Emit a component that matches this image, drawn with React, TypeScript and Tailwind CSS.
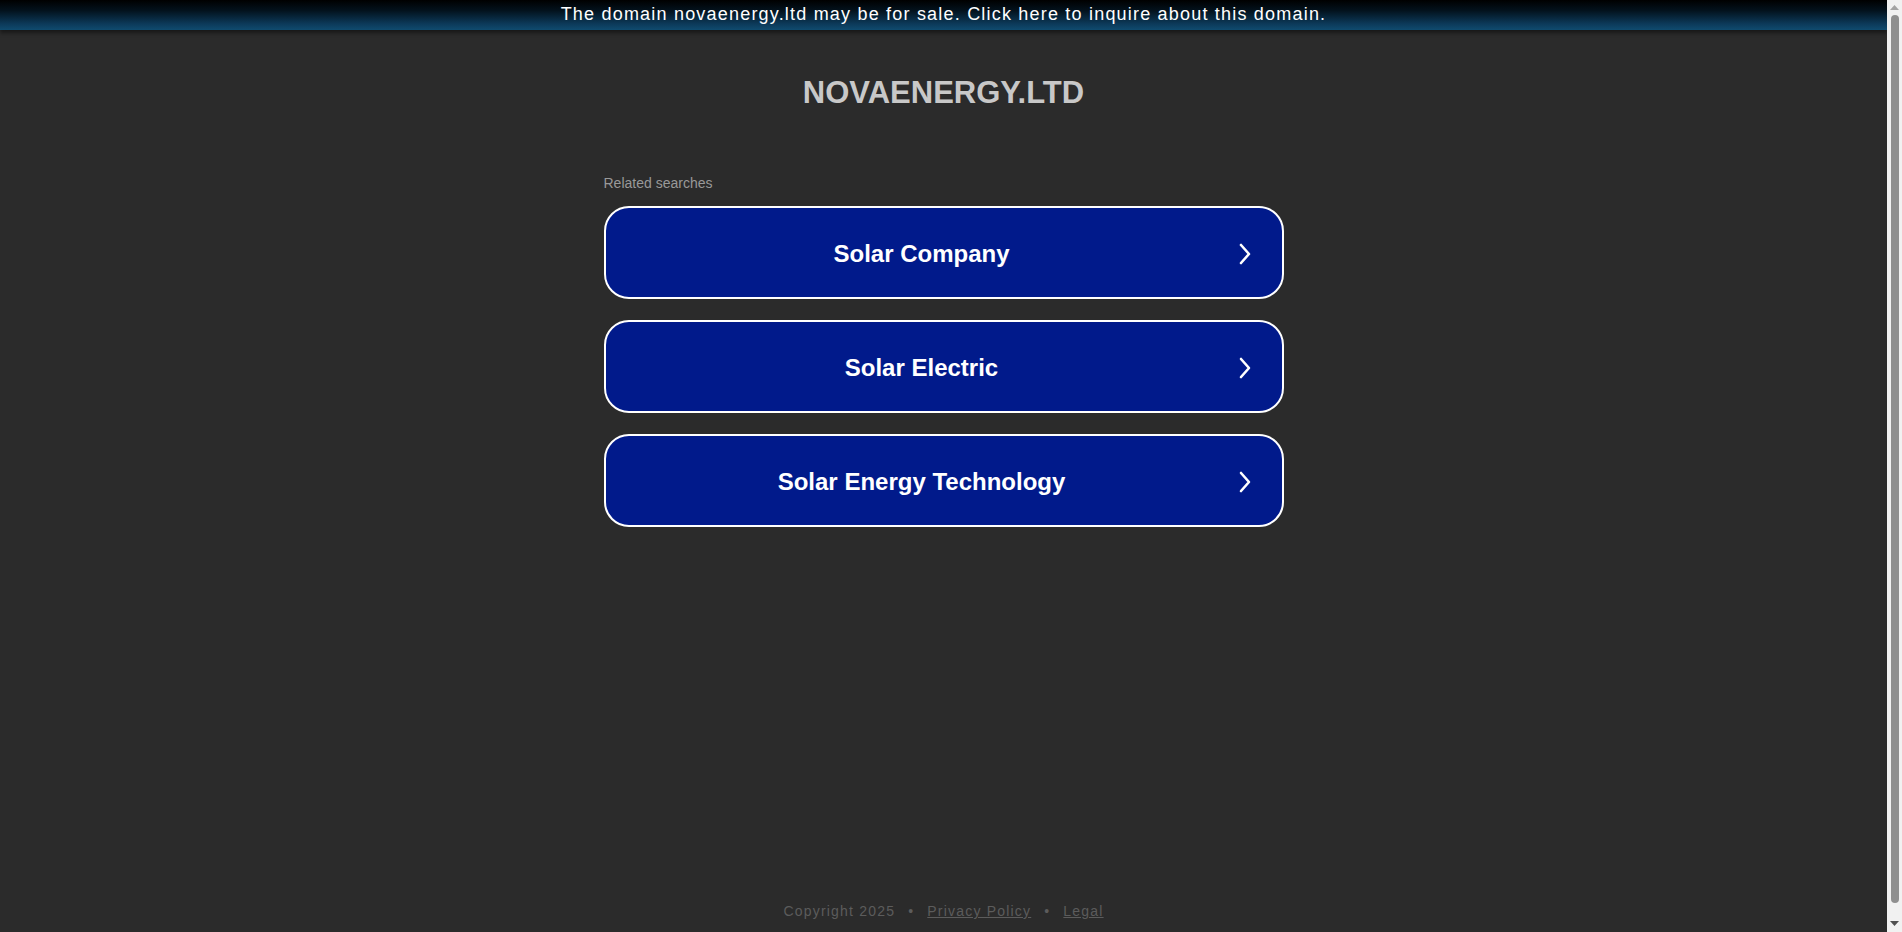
const searches = ["Solar Company", "Solar Electric", "Solar Energy Technology"];

function Chevron() {
  return (
    <svg width="14" height="24" viewBox="0 0 14 24" fill="none" className="shrink-0">
      <path d="M3 3 L11 12 L3 21" stroke="white" strokeWidth="2.6" strokeLinecap="round" strokeLinejoin="round" />
    </svg>
  );
}

export default function App() {
  return (
    <div className="flex h-[932px] overflow-hidden bg-[#2b2b2b] font-['Liberation_Sans',Arial,sans-serif]">
      <div className="flex min-w-0 flex-1 flex-col">
        {/* Sale banner */}
        <a
          href="#"
          className="block h-[30px] bg-[linear-gradient(to_bottom,#000000_0%,#03121d_35%,#0c3a5a_80%,#0f4b6f_100%)] text-center text-[18px] leading-[29px] tracking-[1.2px] text-white shadow-[0_3px_4px_rgba(0,0,0,0.45)]"
        >
          The domain novaenergy.ltd may be for sale. Click here to inquire about this domain.
        </a>

        {/* Domain title */}
        <h1 className="pt-[45px] text-center text-[31px] font-bold leading-[36px] text-[#c8c8c8]">
          NOVAENERGY.LTD
        </h1>

        {/* Related searches */}
        <div className="mx-auto mt-[64px] w-[680px]">
          <p className="text-[14px] leading-4 text-[#999999]">Related searches</p>
          <div className="mt-[15px] flex flex-col gap-[21px]">
            {searches.map((s) => (
              <a
                key={s}
                href="#"
                className="flex h-[93px] items-center rounded-[25px] border-2 border-white bg-[#011a8b] pt-[3px] pr-[30px] text-white"
              >
                <span className="flex-1 text-center text-[24px] font-bold">{s}</span>
                <Chevron />
              </a>
            ))}
          </div>
        </div>

        {/* Footer */}
        <footer className="mt-auto pb-[13px] text-center text-[14px] leading-4 tracking-[1.2px] text-[#5c5c5c]">
          <span>Copyright 2025</span>
          <span className="mx-[13px]">•</span>
          <a href="#" className="underline">Privacy Policy</a>
          <span className="mx-[13px]">•</span>
          <a href="#" className="underline">Legal</a>
        </footer>
      </div>

      {/* Scrollbar */}
      <div className="flex w-[15px] shrink-0 flex-col items-center bg-[#f1f1f1]">
        <svg width="9" height="6" viewBox="0 0 9 6" className="mt-[5px]">
          <path d="M0 5 L4.5 0 L9 5 Z" fill="#a3a3a3" />
        </svg>
        <div className="mt-[4px] w-[8px] flex-1 rounded-full bg-[#8f8f8f]" />
        <svg width="9" height="6" viewBox="0 0 9 6" className="mb-[5px] mt-[18px]">
          <path d="M0 0 L9 0 L4.5 5 Z" fill="#505050" />
        </svg>
      </div>
    </div>
  );
}
